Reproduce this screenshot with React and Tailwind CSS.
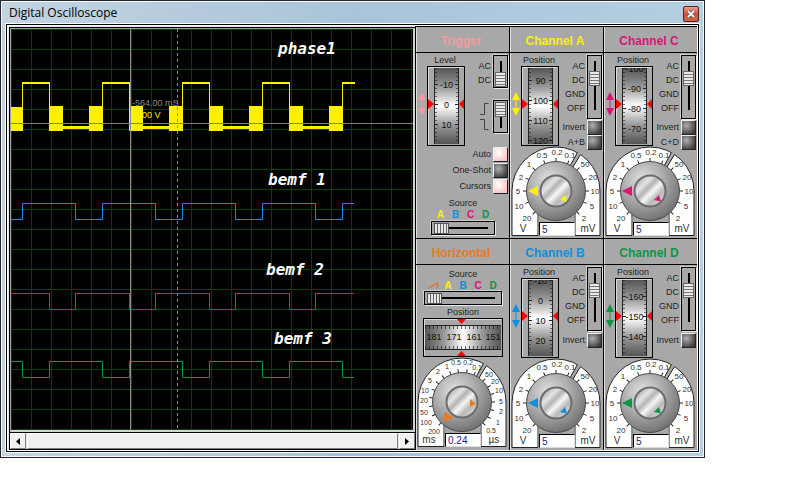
/**
 * DIGITAL OSCILLOSCOPE
 * --------------------
 * Four channel scope window: the trace screen on the left,
 * a 3 x 2 grid of control panels on the right.
 */

import React from 'react';

const COLORS = {
  trigger: '#f09ca0',
  horizontal: '#e87a22',
  a: '#fff000',
  b: '#0e90dc',
  c: '#dc1478',
  d: '#0a9646',
};

const UI_FONT = '"Liberation Sans", Arial, sans-serif';

/* ---------- Trace screen ---------- */

const GRID = Array.from({ length: 21 }, (_, i) => i * 20);

// Builds a square wave path from its first level and the x of each edge
function squareWave(high, low, startHigh, edges, end) {
  let y = startHigh ? high : low;
  let d = `M0 ${y + 0.5}`;
  edges.forEach((x) => {
    y = y === high ? low : high;
    d += `H${x + 0.5}V${y + 0.5}`;
  });
  return `${d}H${end}`;
}

const BEMF_1 = squareWave(174, 190, false, [11, 64, 91, 144, 171, 224, 251, 304, 331], 343);
const BEMF_2 = squareWave(264, 280, true, [38, 64, 118, 144, 198, 224, 278, 304], 343);
const BEMF_3 = squareWave(332, 348, true, [11, 38, 91, 118, 171, 198, 251, 278, 331], 343);

const NOTES = [
  { text: 'phase1', x: 267, y: 25 },
  { text: 'bemf 1', x: 257, y: 156 },
  { text: 'bemf 2', x: 255, y: 246 },
  { text: 'bemf 3', x: 263, y: 315 },
];

function Screen() {
  return (
    <svg viewBox="0 0 402 401" className="block h-auto w-full bg-black" fontFamily={UI_FONT}>
      <g fill="#004400">
        {GRID.map((p) => (
          <React.Fragment key={p}>
            <rect x={p} y="0" width="1" height="401" />
            <rect x="0" y={p} width="402" height="1" />
          </React.Fragment>
        ))}
      </g>

      <text x="121" y="77" fontSize="9" fill="#8a8a8a">-564.00 mS</text>
      <text x="131" y="89" fontSize="9" fill={COLORS.a}>00 V</text>

      {/* phase1: PWM bursts either side of each high level */}
      <g fill={COLORS.a}>
        <rect x="0" y="78" width="12" height="24" />
        {[38, 118, 198, 278].map((x) => (
          <React.Fragment key={x}>
            <rect x={x} y="77" width="14" height="25" />
            <rect x={x + 14} y="97" width="27" height="3" />
            <rect x={x + 40} y="77" width="14" height="25" />
            <rect x={x + 53} y="53" width="1" height="25" />
          </React.Fragment>
        ))}
        {[11, 91, 171, 251].map((x) => (
          <React.Fragment key={x}>
            <rect x={x} y="53" width="28" height="2" />
            <rect x={x + 27} y="53" width="1" height="25" />
          </React.Fragment>
        ))}
        <rect x="11" y="53" width="1" height="25" />
        <rect x="331" y="53" width="13" height="2" />
      </g>

      <g fill="none" strokeWidth="1">
        <path d={BEMF_1} stroke={COLORS.b} />
        <path d={BEMF_2} stroke={COLORS.c} />
        <path d={BEMF_3} stroke={COLORS.d} />
      </g>

      {/* Cursors */}
      <rect x="0" y="94" width="402" height="1" fill="#808080" />
      <rect x="119" y="0" width="1" height="401" fill="#8c8c8c" />
      <path d="M166.5 0V401" stroke="#8c8c8c" strokeDasharray="3 3" />

      <g fill="#ffffff" fontFamily="'DejaVu Sans Mono', monospace" fontSize="16" fontStyle="italic" fontWeight="700">
        {NOTES.map((n) => (
          <text key={n.text} x={n.x} y={n.y}>{n.text}</text>
        ))}
      </g>
    </svg>
  );
}

function ScrollBar() {
  const arrow =
    'flex w-4 shrink-0 items-center justify-center border border-t-white border-l-white border-r-[#808080] border-b-[#808080] bg-[#f0f0f0]';
  return (
    <div className="flex h-[17px] border-b border-black bg-[#e3e3e3]">
      <button type="button" aria-label="Scroll left" className={arrow}>
        <svg width="4" height="7" viewBox="0 0 4 7"><path d="M4 0V7L0 3.5Z" /></svg>
      </button>
      <div className="mx-px flex-1 border border-t-white border-l-white border-r-[#808080] border-b-[#808080] bg-[#f0f0f0]" />
      <button type="button" aria-label="Scroll right" className={arrow}>
        <svg width="4" height="7" viewBox="0 0 4 7"><path d="M0 0V7L4 3.5Z" /></svg>
      </button>
    </div>
  );
}

/* ---------- Small controls ---------- */

// Vertical selector switch, first position at the top
function SwitchV({ label, max, value, box, track }) {
  return (
    <div className={`flex w-[15px] shrink-0 items-start justify-center border border-black bg-[#a8a8a8] pt-px shadow-[1px_1px_0_#e8e8e8,-1px_-1px_0_#d0d0d0] ${box}`}>
      <input
        type="range"
        aria-label={label}
        min="0"
        max={max}
        defaultValue={value}
        className={`m-0 w-[11px] appearance-none bg-[linear-gradient(#000,#000)] bg-[length:2px_calc(100%-8px)] bg-center bg-no-repeat [writing-mode:vertical-lr] [&::-webkit-slider-thumb]:h-[15px] [&::-webkit-slider-thumb]:w-[11px] [&::-webkit-slider-thumb]:appearance-none [&::-webkit-slider-thumb]:border [&::-webkit-slider-thumb]:border-[#666] [&::-webkit-slider-thumb]:bg-[repeating-linear-gradient(#e8e8e8_0_2px,#777_2px_3px)] ${track}`}
      />
    </div>
  );
}

function SwitchH({ label, box }) {
  return (
    <div className={`flex h-3.5 items-center border border-black bg-[#a8a8a8] px-0.5 shadow-[1px_1px_0_#e8e8e8,-1px_-1px_0_#d0d0d0] ${box}`}>
      <input
        type="range"
        aria-label={label}
        min="0"
        max="3"
        defaultValue="0"
        className="m-0 h-[11px] w-full appearance-none bg-[linear-gradient(#000,#000)] bg-[length:calc(100%-8px)_2px] bg-center bg-no-repeat [&::-webkit-slider-thumb]:h-[11px] [&::-webkit-slider-thumb]:w-[15px] [&::-webkit-slider-thumb]:appearance-none [&::-webkit-slider-thumb]:border [&::-webkit-slider-thumb]:border-[#555] [&::-webkit-slider-thumb]:bg-[repeating-linear-gradient(90deg,#e8e8e8_0_2px,#666_2px_3px)]"
      />
    </div>
  );
}

function PushButton({ id, label, lit }) {
  return (
    <div className="flex h-4 items-center justify-end gap-0.5">
      <label htmlFor={id} className="whitespace-nowrap">{label}</label>
      <button
        id={id}
        type="button"
        className={`size-[15px] shrink-0 border border-t-[#eee] border-l-[#eee] border-r-[#222] border-b-[#222] ${
          lit
            ? 'bg-[radial-gradient(circle_at_35%_35%,#fff,#fbc4c4_80%)]'
            : 'bg-[radial-gradient(circle_at_35%_35%,#b0b0b0,#3c3c3c_80%)]'
        }`}
      />
    </div>
  );
}

function SourceLetters({ ramp }) {
  return (
    <div className="flex justify-center text-[10px] font-bold leading-[11px]">
      {ramp && (
        <span className="flex w-[15px] items-center justify-center">
          <svg width="11" height="7" viewBox="0 0 11 7">
            <path d="M0 6.5L9.5 0.8V6.5" fill="none" stroke={COLORS.horizontal} strokeWidth="1.4" />
          </svg>
        </span>
      )}
      <span className="w-[15px] text-center text-[#fff000]">A</span>
      <span className="w-[15px] text-center text-[#0e90dc]">B</span>
      <span className="w-[15px] text-center text-[#dc1478]">C</span>
      <span className="w-[15px] text-center text-[#0a9646]">D</span>
    </div>
  );
}

/* ---------- Thumb wheels ---------- */

function WheelShade({ id, horizontal }) {
  return (
    <linearGradient id={id} x1="0" y1="0" x2={horizontal ? 1 : 0} y2={horizontal ? 0 : 1}>
      <stop offset="0" stopColor="#555555" />
      <stop offset="0.25" stopColor="#999999" />
      <stop offset="0.5" stopColor="#ffffff" />
      <stop offset="0.75" stopColor="#999999" />
      <stop offset="1" stopColor="#555555" />
    </linearGradient>
  );
}

function WheelV({ id, color, marks }) {
  const first = marks[0][1] % 4;
  return (
    <svg width="48" height="80" viewBox="0 0 48 80" className="block" fontFamily={UI_FONT}>
      <defs><WheelShade id={id} /></defs>
      <g fill={color}>
        <path d="M5 26L9 34H1Z" />
        <path d="M5 50L9 42H1Z" />
        <rect x="4.5" y="33" width="1" height="10" />
      </g>
      <rect x="10.5" y="0.5" width="37" height="79" fill="#a8a8a8" stroke="#000" />
      <path d="M11.5 78.5V1.5H46.5" fill="none" stroke="#dcdcdc" />
      <svg x="17" y="2" width="25" height="76">
        <rect width="25" height="76" fill={`url(#${id})`} />
        {Array.from({ length: 20 }, (_, i) => (
          <path key={i} d={`M1 ${first + i * 4 - 1.5}h2M22 ${first + i * 4 - 1.5}h2`} stroke="#222" opacity="0.6" />
        ))}
        <g fontSize="9" textAnchor="middle" fill="#111">
          {marks.map(([text, y]) => (
            <React.Fragment key={text}>
              <path d={`M1 ${y - 1.5}h3M21 ${y - 1.5}h3`} stroke="#222" />
              <text x="12.5" y={y + 2}>{text}</text>
            </React.Fragment>
          ))}
        </g>
        <path d="M0.5 0V76M24.5 0V76" stroke="#222" />
      </svg>
      <path d="M11 33L17 38L11 43ZM47 33L42 38L47 43Z" fill="#f00" />
    </svg>
  );
}

function WheelH() {
  return (
    <svg width="80" height="39" viewBox="0 0 80 39" className="block" fontFamily={UI_FONT}>
      <defs><WheelShade id="wheel-h" horizontal /></defs>
      <rect x="0.5" y="0.5" width="79" height="38" fill="#a8a8a8" stroke="#000" />
      <path d="M1.5 37.5V1.5H78.5" fill="none" stroke="#dcdcdc" />
      <svg x="2" y="7" width="76" height="25">
        <rect width="76" height="25" fill="url(#wheel-h)" />
        {Array.from({ length: 19 }, (_, i) => (
          <path key={i} d={`M${i * 4 + 0.5} 1v3M${i * 4 + 0.5} 21v3`} stroke="#222" opacity="0.7" />
        ))}
        <g fontSize="9" textAnchor="middle" fill="#111">
          <text x="9" y="15">181</text>
          <text x="29" y="15">171</text>
          <text x="49" y="15">161</text>
          <text x="68" y="15">151</text>
        </g>
        <path d="M0 0.5H76M0 24.5H76" stroke="#222" />
      </svg>
      <path d="M34 1H43L38.5 6ZM34 38H43L38.5 33Z" fill="#f00" />
    </svg>
  );
}

/* ---------- Rotary dial ---------- */

const VOLT_SCALE = [
  ['20', -29, 27], ['10', -37, 15], ['5', -38, 0], ['2', -35, -14], ['1', -27, -27],
  ['0.5', -14, -36], ['0.2', 1, -39], ['0.1', 14, -36],
  ['50', 29, -27], ['20', 37, -14], ['10', 39, 0], ['5', 36, 15], ['2', 28, 27],
];

const TIME_SCALE = [
  ['200', -28, 29], ['100', -36, 20], ['50', -38, 10], ['20', -38, -2], ['10', -37, -12],
  ['5', -32, -22], ['2', -24, -31], ['1', -15, -36], ['0.5', -6, -40], ['0.2', 6, -40],
  ['0.1', 15, -35], ['50', 27, -28], ['20', 33, -21], ['10', 37, -12], ['5', 39, -1],
  ['2', 39, 9], ['1', 36, 20], ['0.5', 29, 28],
];

const VOLT_TICKS = [-45, -22, 0, 22, 45, 67, 90, 112, 135, 157, 180, 202, 225];
const TIME_TICKS = [-45, -30, -15, 0, 15, 30, 45, 66, 81, 97, 112, 127, 142, 157, 172, 188, 205, 225];

function Dial({ id, color, value, time }) {
  const scale = time ? TIME_SCALE : VOLT_SCALE;
  const ticks = time ? TIME_TICKS : VOLT_TICKS;
  return (
    <div className="relative">
      <svg width="91" height="90" viewBox="-45 -45 91 90" className="block" fontFamily={UI_FONT}>
        <defs>
          <radialGradient id={`${id}-body`} cx="0.38" cy="0.32" r="0.75">
            <stop offset="0" stopColor="#e4e4e4" />
            <stop offset="0.5" stopColor="#a8a8a8" />
            <stop offset="1" stopColor="#6a6a6a" />
          </radialGradient>
          <linearGradient id={`${id}-cap`} x1="0" y1="0" x2="1" y2="1">
            <stop offset="0" stopColor="#8a8a8a" />
            <stop offset="0.3" stopColor="#e4e4e4" />
            <stop offset="0.42" stopColor="#b4b4b4" />
            <stop offset="0.55" stopColor="#f6f6f6" />
            <stop offset="0.7" stopColor="#b8b8b8" />
            <stop offset="1" stopColor="#eeeeee" />
          </linearGradient>
        </defs>

        {/* Scale plate, open at the bottom for the value box */}
        <path
          d="M-44 44.5V0A44 44 0 0 1 44 0V44.5H19V22L0 0L-18 22V44.5Z"
          fill="#fff"
          stroke="#222"
        />
        <path d="M14 -25L21.5 -39L25 -37L17 -24Z" fill="#a8a8a8" />
        <path d="M14 -25L21.5 -38.5M17 -24L24.5 -36.5" stroke="#222" fill="none" />
        <path d="M-17.5 20H18.5V44.5H-17.5Z" fill="#a8a8a8" />

        <g stroke="#222">
          {ticks.map((deg) => (
            <path key={deg} d="M29 0H33" transform={`rotate(${-deg})`} />
          ))}
        </g>
        <g fontSize={time ? 7 : 8} textAnchor="middle" fill="#333">
          {scale.map(([text, x, y]) => (
            <text key={`${text}${x}`} x={x} y={y + 3}>{text}</text>
          ))}
        </g>
        <g fontSize="10" textAnchor="middle" fill="#333">
          <text x="-33" y="41">{time ? 'ms' : 'V'}</text>
          <text x="32" y="41">{time ? 'µs' : 'mV'}</text>
        </g>

        <circle r="29.5" fill={`url(#${id}-body)`} stroke="#4a4a4a" />
        <circle r="15.5" fill={`url(#${id}-cap)`} stroke="#6c6c6c" strokeWidth="2" />
        {time ? (
          <path d="M-17 10L-8.5 16L-19 19.5ZM8 -3L14 2L8 4.5Z" fill={color} />
        ) : (
          <path d="M-28 0L-18 -5V5ZM4 9L9 4L11 10.5Z" fill={color} />
        )}
      </svg>
      <input
        type="text"
        aria-label={time ? 'Time per division' : 'Volts per division'}
        defaultValue={value}
        className="absolute bottom-0 left-7 h-3.5 w-9 border border-t-black border-l-black border-r-[#ddd] border-b-[#ddd] bg-white px-0.5 text-[10px] leading-3 text-[#20208c]"
      />
    </div>
  );
}

/* ---------- Panels ---------- */

function Panel({ title, tone, children }) {
  return (
    <section className="flex flex-col border-t border-l border-black bg-[#a8a8a8] text-[9px] leading-[11px] text-[#222]">
      <h2 className={`flex h-[25px] items-center justify-center border-l border-[#e0e0e0] pt-1 pr-1 text-[12px] font-bold ${tone}`}>
        {title}
      </h2>
      <div className="flex-1 border-t border-black">
        <div className="h-full border-l border-[#e0e0e0] pt-0.5">{children}</div>
      </div>
    </section>
  );
}

function Channel({ name, tone, color, marks, invertSum }) {
  const id = `ch-${name}`;
  return (
    <Panel title={`Channel ${name}`} tone={tone}>
      <div className="relative z-10 flex h-[91px] pr-px">
        <div>
          <div className="pl-2 text-center">Position</div>
          <WheelV id={`${id}-wheel`} color={color} marks={marks} />
        </div>
        <div className="flex flex-1 flex-col items-end">
          <div className="mb-px flex gap-0.5">
            <div className="pt-1 text-right leading-[14px]">
              <div>AC</div>
              <div>DC</div>
              <div>GND</div>
              <div>OFF</div>
            </div>
            <SwitchV label={`Channel ${name} coupling`} max="3" value="1" box="h-16" track="h-[57px]" />
          </div>
          <PushButton id={`${id}-invert`} label="Invert" />
          {invertSum && <PushButton id={`${id}-sum`} label={invertSum} />}
        </div>
      </div>
      <Dial id={`${id}-dial`} color={color} value="5" />
    </Panel>
  );
}

function Trigger() {
  return (
    <Panel title="Trigger" tone="text-[#f09ca0]">
      <div className="flex h-[91px] pr-px">
        <div>
          <div className="pl-2 text-center">Level</div>
          <WheelV id="trigger-wheel" color={COLORS.trigger} marks={[['-10', 18], ['0', 38], ['10', 58]]} />
        </div>
        <div className="flex flex-1 flex-col items-end gap-3">
          <div className="flex gap-0.5">
            <div className="pt-1 text-right leading-[14px]">
              <div>AC</div>
              <div>DC</div>
            </div>
            <SwitchV label="Trigger coupling" max="1" value="1" box="h-[33px]" track="h-[30px]" />
          </div>
          <div className="flex items-center gap-1">
            <svg width="9" height="28" viewBox="0 0 9 28" fill="none" stroke="#444">
              <path d="M0 11.5H4.5V0.5H8.500M0 16.5H4.5V26.5H8.5" />
            </svg>
            <SwitchV label="Trigger edge" max="1" value="0" box="h-[33px]" track="h-[30px]" />
          </div>
        </div>
      </div>
      <div className="pr-px">
        <PushButton id="trigger-auto" label="Auto" lit />
        <PushButton id="trigger-one-shot" label="One-Shot" />
        <PushButton id="trigger-cursors" label="Cursors" lit />
      </div>
      <div className="mt-1 text-center">Source</div>
      <SourceLetters />
      <SwitchH label="Trigger source" box="mx-auto mt-px w-16" />
    </Panel>
  );
}

function Horizontal() {
  return (
    <Panel title="Horizontal" tone="text-[#e87a22]">
      <div className="flex flex-col items-center pt-0.5">
        <div>Source</div>
        <SourceLetters ramp />
        <SwitchH label="Horizontal source" box="w-[78px]" />
        <div className="mt-0.5">Position</div>
        <WheelH />
      </div>
      <Dial id="time-dial" color={COLORS.horizontal} value="0.24" time />
    </Panel>
  );
}

export default function App() {
  return (
    <div className="min-h-screen bg-white font-['Liberation_Sans',Arial,sans-serif]">
      <div className="mr-[97px] border border-[#232831]">
        <div className="border border-[#f4f8fb] bg-linear-to-r from-[#c3d4e1] via-[#a9c4d9] to-[#b4cfe2] px-[3px] pb-[3px]">
          <div className="flex h-[21px] items-center justify-between pr-px pl-1">
            <h1 className="font-['Open_Sans','Noto_Sans',sans-serif] text-[12px] leading-5 text-black">
              Digital Oscilloscope
            </h1>
            <button
              type="button"
              aria-label="Close"
              className="mt-0.5 flex size-4 items-center justify-center rounded-xs border border-[#5c2018] bg-linear-to-b from-[#e8a090] via-[#d05038] to-[#c86848]"
            >
              <svg width="8" height="8" viewBox="0 0 8 8">
                <path d="M1 1L7 7M7 1L1 7" stroke="#444" strokeWidth="3" />
                <path d="M1 1L7 7M7 1L1 7" stroke="#fff" strokeWidth="1.8" />
              </svg>
            </button>
          </div>

          <main className="border border-white">
            <div className="border border-black">
              <div className="flex border border-white">
                <div className="min-w-0 flex-1 bg-[#e6e6e6] pt-px pl-px">
                  <div className="border-t border-l border-black">
                    <div className="border-t border-l border-r-2 border-b-2 border-t-[#a0a0a0] border-r-[#d4d0d4] border-b-[#d4d0d4] border-l-[#a0a0a0]">
                      <Screen />
                    </div>
                    <div className="border-t border-black">
                      <ScrollBar />
                    </div>
                  </div>
                </div>

                <div className="grid shrink-0 grid-cols-[94px_94px_94px] grid-rows-2">
                  <Trigger />
                  <Channel
                    name="A"
                    tone="text-[#fff000]"
                    color={COLORS.a}
                    marks={[['90', 14], ['100', 34], ['110', 54], ['120', 74]]}
                    invertSum="A+B"
                  />
                  <Channel
                    name="C"
                    tone="text-[#dc1478]"
                    color={COLORS.c}
                    marks={[['-100', 2], ['-90', 22], ['-80', 42], ['-70', 62]]}
                    invertSum="C+D"
                  />
                  <Horizontal />
                  <Channel
                    name="B"
                    tone="text-[#0e90dc]"
                    color={COLORS.b}
                    marks={[['-10', 2], ['0', 22], ['10', 42], ['20', 62]]}
                  />
                  <Channel
                    name="D"
                    tone="text-[#0a9646]"
                    color={COLORS.d}
                    marks={[['-160', 18], ['-150', 38], ['-140', 58]]}
                  />
                </div>
              </div>
            </div>
          </main>
        </div>
      </div>
    </div>
  );
}
